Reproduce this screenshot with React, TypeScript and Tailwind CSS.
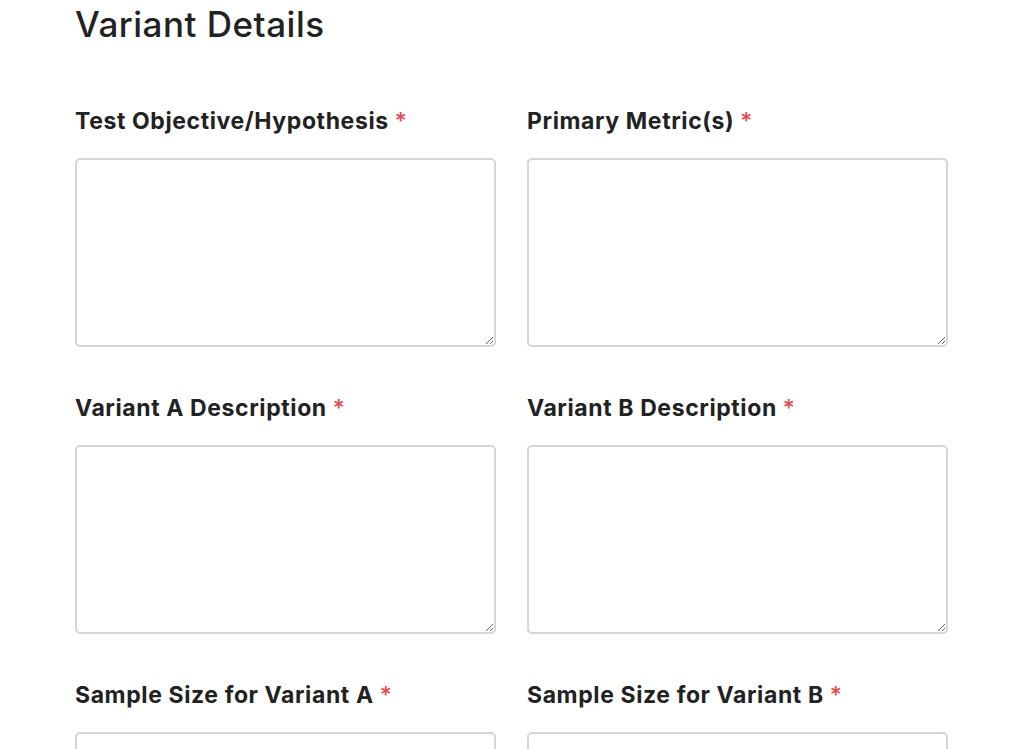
import React from "react";

function Field({ label, tall = true }: { label: string; tall?: boolean }) {
  return (
    <div className="flex flex-col">
      <label className="text-[23px] leading-[30px] font-bold text-[#222] tracking-[0.6px] mb-[22px]">
        {label} <span className="text-[#e5484d] font-medium">*</span>
      </label>
      {tall ? (
        <textarea className="w-[421px] h-[189px] border-2 border-[#d6d6d6] rounded-[5px] bg-white outline-none" />
      ) : (
        <input className="w-[421px] h-[48px] border-2 border-[#d6d6d6] rounded-[5px] bg-white outline-none" />
      )}
    </div>
  );
}

export default function App() {
  return (
    <div
      className="w-[1024px] h-[749px] overflow-hidden bg-white pl-[75px] pt-[4px]"
      style={{ fontFamily: "Inter, 'Noto Sans', sans-serif" }}
    >
      <h1 className="text-[35px] leading-[40px] font-medium text-[#222] tracking-[0.5px]">Variant Details</h1>
      <div className="mt-[62px] grid grid-cols-[421px_421px] gap-x-[31px] gap-y-[46px]">
        <Field label="Test Objective/Hypothesis" />
        <Field label="Primary Metric(s)" />
        <Field label="Variant A Description" />
        <Field label="Variant B Description" />
        <Field label="Sample Size for Variant A" tall={false} />
        <Field label="Sample Size for Variant B" tall={false} />
      </div>
    </div>
  );
}
